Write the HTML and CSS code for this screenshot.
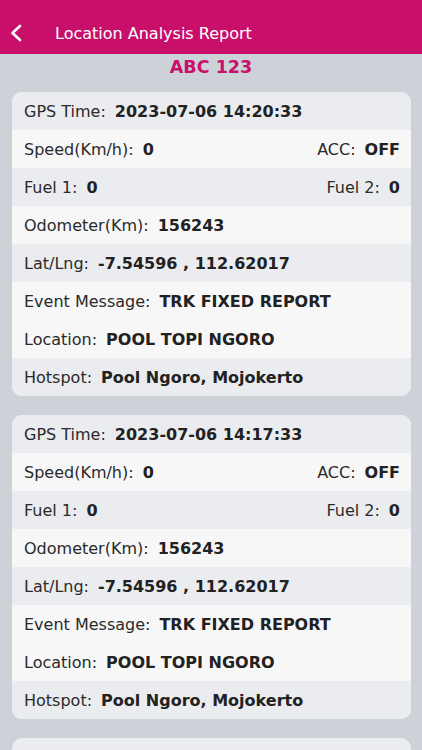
FILE: index.html
```html
<!DOCTYPE html>
<html lang="en">
<head>
    <meta charset="UTF-8">
    <meta name="viewport" content="width=device-width, initial-scale=1.0">
    <title>Location Analysis Report</title>
    <link rel="stylesheet" href="styles.css">
</head>
<body>
    <div class="cabecera">
        <svg class="volver" width="14" height="18" viewBox="0 0 14 18">
            <path d="M11 2 L3.5 9 L11 16" fill="none" stroke="#fff" stroke-width="2.6" stroke-linecap="round" stroke-linejoin="round"/>
        </svg>
        <span class="cabecera-titulo">Location Analysis Report</span>
    </div>
    <div class="placa">ABC 123</div>

    <div class="lista">
        <div class="tarjeta">
            <div class="fila gris"><span class="etiqueta">GPS Time:</span><b>2023-07-06 14:20:33</b></div>
            <div class="fila doble"><span><span class="etiqueta">Speed(Km/h):</span><b>0</b></span><span><span class="etiqueta">ACC:</span><b>OFF</b></span></div>
            <div class="fila gris doble"><span><span class="etiqueta">Fuel 1:</span><b>0</b></span><span><span class="etiqueta">Fuel 2:</span><b>0</b></span></div>
            <div class="fila"><span class="etiqueta">Odometer(Km):</span><b>156243</b></div>
            <div class="fila gris"><span class="etiqueta">Lat/Lng:</span><b>-7.54596 , 112.62017</b></div>
            <div class="fila"><span class="etiqueta">Event Message:</span><b>TRK FIXED REPORT</b></div>
            <div class="fila"><span class="etiqueta">Location:</span><b>POOL TOPI NGORO</b></div>
            <div class="fila gris"><span class="etiqueta">Hotspot:</span><b>Pool Ngoro, Mojokerto</b></div>
        </div>

        <div class="tarjeta">
            <div class="fila gris"><span class="etiqueta">GPS Time:</span><b>2023-07-06 14:17:33</b></div>
            <div class="fila doble"><span><span class="etiqueta">Speed(Km/h):</span><b>0</b></span><span><span class="etiqueta">ACC:</span><b>OFF</b></span></div>
            <div class="fila gris doble"><span><span class="etiqueta">Fuel 1:</span><b>0</b></span><span><span class="etiqueta">Fuel 2:</span><b>0</b></span></div>
            <div class="fila"><span class="etiqueta">Odometer(Km):</span><b>156243</b></div>
            <div class="fila gris"><span class="etiqueta">Lat/Lng:</span><b>-7.54596 , 112.62017</b></div>
            <div class="fila"><span class="etiqueta">Event Message:</span><b>TRK FIXED REPORT</b></div>
            <div class="fila"><span class="etiqueta">Location:</span><b>POOL TOPI NGORO</b></div>
            <div class="fila gris"><span class="etiqueta">Hotspot:</span><b>Pool Ngoro, Mojokerto</b></div>
        </div>

        <div class="tarjeta corta"></div>
    </div>
</body>
</html>
```

FILE: styles.css
```css
body {
    font-family: "DejaVu Sans", "Liberation Sans", Arial, sans-serif;
    margin: 0;
    padding: 0;
    background-color: #cdd1d8;
    color: #1f1f1f;
    height: 750px;
    overflow: hidden;
}
.cabecera {
    height: 54px;
    background-color: #c8106b;
    display: flex;
    align-items: center;
    padding-top: 12px;
    box-sizing: border-box;
}
.volver {
    margin-left: 9px;
}
.cabecera-titulo {
    color: #fff;
    font-size: 16px;
    margin-left: 32px;
}
.placa {
    text-align: center;
    color: #c8106b;
    font-weight: bold;
    font-size: 17.5px;
    height: 26px;
    line-height: 26px;
    margin-bottom: 12px;
}
.lista {
    display: flex;
    flex-direction: column;
    gap: 19px;
    padding: 0 11px 0 12px;
}
.tarjeta {
    border-radius: 10px;
    overflow: hidden;
    background-color: #f7f7f8;
}
.tarjeta.corta {
    height: 38px;
    background-color: #ebecef;
}
.fila {
    height: 38px;
    display: flex;
    align-items: center;
    padding: 0 11px 0 12px;
    font-size: 16px;
    white-space: pre;
}
.fila.gris {
    background-color: #ebecef;
}
.fila.doble {
    justify-content: space-between;
}
.etiqueta {
    color: #2a2a2a;
    margin-right: 9px;
}
.fila b {
    font-weight: 700;
    color: #222;
}
```
